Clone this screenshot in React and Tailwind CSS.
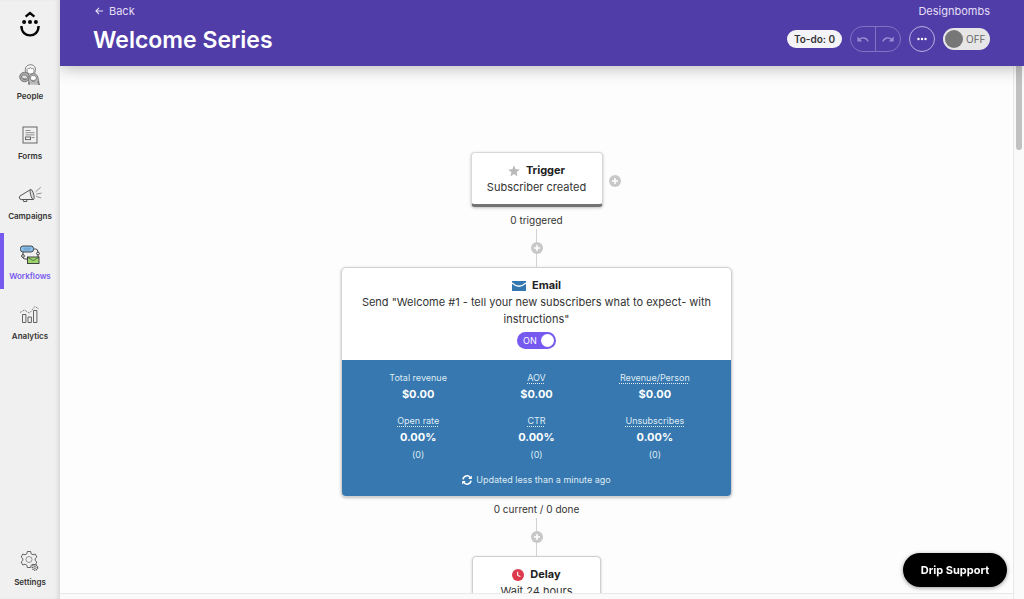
import { useState } from "react"

function Logo() {
  return (
    <svg viewBox="0 0 20 26" className="w-5 h-[26px]" fill="none" stroke="#050505">
      <path d="M5.6 5.6 L10 2 L14.4 5.6" strokeWidth="2.3" />
      <path d="M1.4 15 C1.4 27.5 18.6 27.5 18.6 15" strokeWidth="2.4" />
      <g fill="#050505" stroke="none">
        <circle cx="4.1" cy="10.9" r="2" />
        <circle cx="10" cy="10.9" r="2" />
        <circle cx="15.9" cy="10.9" r="2" />
      </g>
    </svg>
  )
}

function PeopleIcon() {
  return (
    <svg viewBox="0 0 22 22" className="w-[22px] h-[22px]" fill="none" stroke="#666" strokeWidth="0.8">
      <path d="M7 9 C5.5 6 6 1 11.5 0.7 C17 0.8 17.2 6 15.6 9" fill="#f3f3f3" />
      <path d="M8 5.5 C9 3.8 10 5 11.4 3.8 C13 5 14 4 15 5.5 C15.3 9 13.5 10 11.5 10 C9.3 10 7.7 8.5 8 5.5Z" fill="#fff" />
      <circle cx="5.5" cy="13" r="4.8" fill="#aaa" />
      <path d="M2.5 12 C5 10 7 11 8.6 13 C8.5 16 3 17 2.5 12Z" fill="#ddd" />
      <path d="M10 20.5 C9 14 10 9.5 14.5 9.6 C19.5 9.8 19 15 20.5 21" fill="#bbb" />
      <path d="M11.3 13 C13 11 16 11 17.3 13.2 C17.8 18.5 11 19 11.3 13Z" fill="#fff" />
      <path d="M12.7 16 q1.7 1.4 3.3 0 M4 14.5 q1.6 1 3 0 M10 18 v3 M18.5 17 l1.5 4" />
    </svg>
  )
}

function FormsIcon() {
  return (
    <svg viewBox="0 0 22 22" className="w-[22px] h-[22px]" fill="none" stroke="#666">
      <rect x="4" y="3" width="14" height="16" strokeWidth="1" />
      <path d="M6.5 6.5 h5 M6.5 8.7 h9 M6.5 10.9 h9 M12.5 13.5 h3" strokeWidth="0.7" />
      <rect x="6.5" y="13" width="5" height="2.6" strokeWidth="1" />
    </svg>
  )
}

function CampaignsIcon() {
  return (
    <svg viewBox="0 0 24 22" className="w-6 h-[22px]" fill="none" stroke="#555" strokeWidth="1" strokeLinejoin="round">
      <path d="M2 12 L12.6 5.5 L15.4 15.5 L3.2 15.5 C1 15.5 1 12.8 2 12Z" />
      <path d="M12.6 5.5 C14.6 4.8 17.6 15 15.4 15.5 C13.4 15.7 11 6 12.6 5.5Z" fill="#ddd" />
      <path d="M5 15.5 l0.6 2 h3.2 v-2" />
      <path d="M18 7.5 l4.5 -4 M18.6 10 l4.6 -0.8 M18.4 12.3 l4.4 1.6" strokeWidth="0.6" strokeLinecap="round" />
    </svg>
  )
}

function WorkflowsIcon() {
  return (
    <svg viewBox="0 0 22 22" className="w-[22px] h-[22px]" fill="none" stroke="#333" strokeWidth="0.9">
      <path d="M14.5 5 h2 q2.5 0 2.5 3 v5 M4 8 v5 q0 2 2 2 h3" />
      <rect x="1.5" y="2" width="13" height="6" rx="2.5" fill="#8cc3ee" />
      <path d="M4.5 4.2 h7 M4.5 5.9 h7" stroke="#4b7fa9" strokeWidth="0.6" />
      <rect x="8.5" y="13" width="11.5" height="6.5" fill="#9bd36d" />
      <path d="M8.5 13.2 l5.7 3.4 l5.7 -3.4" strokeWidth="0.6" />
      <circle cx="4" cy="12" r="1.4" fill="#f3f3f3" />
      <circle cx="19" cy="9.5" r="1.4" fill="#f3f3f3" />
    </svg>
  )
}

function AnalyticsIcon() {
  return (
    <svg viewBox="0 0 22 22" className="w-[22px] h-[22px]" fill="none" stroke="#555" strokeWidth="0.9">
      <path d="M3.5 18.5 v-8 h3.4 v8Z M9 18.5 v-5.5 h3.4 v5.5Z M14.5 18.5 v-12 h3.4 v12Z" />
      <path d="M1 8.5 L5.5 6 L10.5 9.2 L15.8 2.5 L20 5" strokeWidth="0.7" strokeDasharray="2 1" />
    </svg>
  )
}

function SettingsIcon() {
  return (
    <svg viewBox="0 0 22 22" className="w-[22px] h-[22px]" fill="none" stroke="#555" strokeWidth="0.9" strokeLinejoin="round">
      <path d="M7.8 3.8 L8.3 1.5 H11.7 L12.2 3.8 L14 4.8 L16.2 4 L17.9 7 L16.2 8.5 V10.5 L17.9 12 L16.2 15 L14 14.2 L12.2 15.2 L11.7 17.5 H8.3 L7.8 15.2 L6 14.2 L3.8 15 L2.1 12 L3.8 10.5 V8.5 L2.1 7 L3.8 4 L6 4.8Z" />
      <circle cx="10" cy="9.5" r="3" strokeWidth="0.6" />
      <circle cx="16" cy="17.5" r="2.7" fill="#e4e4e4" strokeDasharray="1.2 0.7" strokeWidth="1.2" />
      <circle cx="16" cy="17.5" r="1.1" strokeWidth="0.6" />
    </svg>
  )
}

const navItems = [
  { label: "People", Icon: PeopleIcon },
  { label: "Forms", Icon: FormsIcon },
  { label: "Campaigns", Icon: CampaignsIcon },
  { label: "Workflows", Icon: WorkflowsIcon, active: true },
  { label: "Analytics", Icon: AnalyticsIcon },
]

const revenueStats = [
  { label: "Total revenue", value: "$0.00" },
  { label: "AOV", value: "$0.00", hint: true },
  { label: "Revenue/Person", value: "$0.00", hint: true },
]

const rateStats = [
  { label: "Open rate", value: "0.00%", count: "(0)", hint: true },
  { label: "CTR", value: "0.00%", count: "(0)", hint: true },
  { label: "Unsubscribes", value: "0.00%", count: "(0)", hint: true },
]

function NavItem({ label, Icon, active }) {
  return (
    <a
      href="#"
      className={`flex h-14 w-full flex-col items-center border-x-4 border-r-transparent pt-[11px] ${
        active ? "border-l-[#7659ef] text-[#7659ef]" : "border-l-transparent text-[#333]"
      }`}
    >
      <Icon />
      <span className="mt-1 whitespace-nowrap text-[8px] leading-3 font-semibold">{label}</span>
    </a>
  )
}

function AddButton({ className = "" }) {
  return (
    <button aria-label="Add step" className={`h-3 w-3 rounded-full bg-[#c8c8c8] ${className}`}>
      <svg viewBox="0 0 12 12" className="h-3 w-3" stroke="#fff" strokeWidth="1.5">
        <path d="M6 3 V9 M3 6 H9" />
      </svg>
    </button>
  )
}

function Connector() {
  return (
    <div className="relative h-[38px] w-px bg-[#d2d2d2]">
      <AddButton className="absolute top-1/2 left-1/2 -translate-x-1/2 -translate-y-1/2" />
    </div>
  )
}

function StepTitle({ icon, children }) {
  return (
    <h2 className="flex items-center justify-center gap-[6px] text-[11px] leading-[17px] font-bold text-[#222]">
      {icon}
      {children}
    </h2>
  )
}

function Stat({ label, value, count, hint }) {
  return (
    <div>
      <dt className="text-[9px] leading-[17px] text-[#dfebf5]">
        <span className={hint ? "underline decoration-dotted decoration-1 underline-offset-2" : ""}>{label}</span>
      </dt>
      <dd className="text-[11px] leading-[17px] font-bold">{value}</dd>
      {count && <dd className="text-[9px] leading-[17px] text-[#dfebf5]">{count}</dd>}
    </div>
  )
}

function Header() {
  const [running, setRunning] = useState(false)

  return (
    <header className="relative z-10 flex h-[66px] shrink-0 justify-between bg-[#513da8] pr-[34px] pl-[33px] text-white shadow-[0_2px_16px_rgba(0,0,0,0.28)]">
      <div>
        <a href="#" className="mt-[3px] flex items-center gap-[5px] pl-[2px] text-[11px] leading-4 text-[#e4dff7]">
          <svg viewBox="0 0 10 10" className="h-[10px] w-[9px]" fill="none" stroke="currentColor" strokeWidth="1.2">
            <path d="M9 5 H1.2 M4.5 1.5 L1 5 L4.5 8.5" />
          </svg>
          Back
        </a>
        <h1 className="mt-[7px] text-[23px] leading-7 font-semibold">Welcome Series</h1>
      </div>
      <div className="flex flex-col items-end">
        <span className="mt-[3px] text-[11px] leading-4 text-[#e4dff7]">Designbombs</span>
        <div className="mt-[7px] flex items-center gap-2">
          <button className="h-[18px] w-[55px] rounded-full bg-[#f4f3f8] text-[10px] leading-[18px] font-semibold whitespace-nowrap text-[#333]">
            To-do: 0
          </button>
          <div className="flex h-[26px] w-[51px] rounded-full border border-[#8272c4] text-[#9b8dd0]">
            <button aria-label="Undo" className="flex flex-1 items-center justify-center border-r border-[#8272c4]">
              <svg viewBox="0 0 12 8" className="h-2 w-3" fill="none" stroke="currentColor" strokeWidth="1.4">
                <path d="M11.2 6.5 C9.5 2.4 5 1.8 2 4.8" />
                <path d="M0.4 1.5 V6.4 H5.3Z" fill="currentColor" stroke="none" />
              </svg>
            </button>
            <button aria-label="Redo" className="flex flex-1 items-center justify-center">
              <svg viewBox="0 0 12 8" className="h-2 w-3" fill="none" stroke="currentColor" strokeWidth="1.4">
                <path d="M0.8 6.5 C2.5 2.4 7 1.8 10 4.8" />
                <path d="M11.6 1.5 V6.4 H6.7Z" fill="currentColor" stroke="none" />
              </svg>
            </button>
          </div>
          <button aria-label="More" className="flex h-[26px] w-[26px] items-center justify-center rounded-full border border-[#b9afe2]">
            <svg viewBox="0 0 10 4" className="h-1 w-[10px]" fill="#fff">
              <circle cx="1.5" cy="2" r="1.2" />
              <circle cx="5" cy="2" r="1.2" />
              <circle cx="8.5" cy="2" r="1.2" />
            </svg>
          </button>
          <button
            role="switch"
            aria-checked={running}
            onClick={() => setRunning(!running)}
            className="flex h-[22px] w-[47px] items-center gap-[3px] rounded-full bg-[#e6e6e6] px-[2px] text-[10px] text-[#666]"
          >
            <span className="h-[18px] w-[18px] shrink-0 rounded-full bg-[#777]" />
            {running ? "ON" : "OFF"}
          </button>
        </div>
      </div>
    </header>
  )
}

function TriggerStep() {
  return (
    <div className="relative">
      <section className="w-[132px] rounded-[4px] border border-b-[3px] border-[#d8d8d8] border-b-[#737373] bg-white pt-[9px] pb-2 text-center shadow-[0_1px_3px_rgba(0,0,0,0.25)]">
        <StepTitle
          icon={
            <svg viewBox="0 0 12 12" className="h-3 w-3" fill="#b9b9b9">
              <path d="M6 0.3 L7.6 4.2 L11.8 4.5 L8.6 7.2 L9.6 11.4 L6 9.1 L2.4 11.4 L3.4 7.2 L0.2 4.5 L4.4 4.2Z" />
            </svg>
          }
        >
          Trigger
        </StepTitle>
        <p className="text-[11px] leading-[17px] whitespace-nowrap">Subscriber created</p>
      </section>
      <AddButton className="absolute top-[23px] left-full ml-[6px]" />
    </div>
  )
}

function EmailStep() {
  const [on, setOn] = useState(true)

  return (
    <section className="w-[391px] overflow-hidden rounded-[5px] border border-[#d2d2d2] bg-white text-center shadow-[0_1px_3px_rgba(0,0,0,0.25)]">
      <div className="flex flex-col items-center px-4 pt-[9px] pb-[11px]">
        <StepTitle
          icon={
            <svg viewBox="0 0 14 10" className="h-[10px] w-[14px]">
              <rect width="14" height="10" fill="#3578b0" />
              <path d="M0 2 Q7 8.5 14 2" fill="none" stroke="#fff" strokeWidth="1.3" />
            </svg>
          }
        >
          Email
        </StepTitle>
        <p className="text-[11px] leading-[17px]">
          Send "Welcome #1 - tell your new subscribers what to expect- with instructions"
        </p>
        <button
          role="switch"
          aria-checked={on}
          onClick={() => setOn(!on)}
          className="mt-1 flex h-[17px] w-[39px] items-center justify-between rounded-full bg-[#7659ef] pr-[2px] pl-[6px] text-[9px] text-white"
        >
          {on ? "ON" : "OFF"}
          <span className="h-[13px] w-[13px] rounded-full bg-white" />
        </button>
      </div>
      <div className="bg-[#3678af] px-[17px] pt-[9px] pb-2 text-white">
        <dl className="grid grid-cols-3 gap-y-[9px]">
          {revenueStats.map((stat) => <Stat key={stat.label} {...stat} />)}
          {rateStats.map((stat) => <Stat key={stat.label} {...stat} />)}
        </dl>
        <p className="mt-2 flex items-center justify-center gap-1 text-[9px] leading-[17px] text-[#dfebf5]">
          <svg viewBox="0 0 10 10" className="h-[10px] w-[10px]" fill="none" stroke="#fff" strokeWidth="1.5">
            <path d="M1 4.3 A4 4 0 0 1 8.3 2.6 M9 5.7 A4 4 0 0 1 1.7 7.4" />
            <path d="M9.8 0.4 V4 H6.2Z M0.2 9.6 V6 H3.8Z" fill="#fff" stroke="none" />
          </svg>
          Updated less than a minute ago
        </p>
      </div>
    </section>
  )
}

function DelayStep() {
  return (
    <section className="w-[129px] rounded-[4px] border border-[#cfcfcf] bg-white pt-[9px] pb-2 text-center shadow-[0_1px_3px_rgba(0,0,0,0.2)]">
      <StepTitle
        icon={
          <svg viewBox="0 0 12 12" className="h-3 w-3" fill="none" stroke="#fff">
            <circle cx="6" cy="6" r="6" fill="#dd3a4d" stroke="none" />
            <path d="M5.7 2.8 V6.4 L8.4 7.5" strokeWidth="1.1" />
          </svg>
        }
      >
        Delay
      </StepTitle>
      <p className="text-[11px] leading-[17px]">Wait 24 hours</p>
    </section>
  )
}

export default function App() {
  return (
    <div className="flex h-screen overflow-hidden bg-[#fdfdfd] font-[Inter,sans-serif] text-[#333]">
      <nav className="z-20 flex w-[60px] shrink-0 flex-col items-center bg-[#f0f0f0] pb-1 shadow-[inset_-4px_0_4px_-2px_rgba(0,0,0,0.1)]">
        <a href="#" aria-label="Home" className="mt-[11px] mb-4">
          <Logo />
        </a>
        <div className="flex w-full flex-col gap-1">
          {navItems.map((item) => <NavItem key={item.label} {...item} />)}
        </div>
        <div className="mt-auto w-full">
          <NavItem label="Settings" Icon={SettingsIcon} />
        </div>
      </nav>

      <div className="flex min-w-0 flex-1 flex-col">
        <Header />
        <div className="flex min-h-0 flex-1">
          <div className="flex min-w-0 flex-1 flex-col">
            <main className="flex min-h-0 flex-1 flex-col items-center overflow-hidden pt-[86px] *:shrink-0">
              <TriggerStep />
              <p className="mt-1 text-[10px] leading-[18px]">0 triggered</p>
              <Connector />
              <EmailStep />
              <p className="mt-[3px] text-[10px] leading-[18px]">0 current / 0 done</p>
              <Connector />
              <DelayStep />
            </main>
            <div className="h-[6px] border-t border-[#e9e9e9] bg-[#fafafa]" />
          </div>
          <div className="w-[11px] shrink-0 border-l border-[#e9e9e9] bg-[#fafafa] px-[2px]">
            <div className="h-[84px] w-[6px] rounded-b-full bg-[#c1c1c1]" />
          </div>
        </div>
      </div>

      <button className="fixed right-[17px] bottom-3 z-30 h-[34px] w-[104px] rounded-full bg-black text-[11px] font-bold text-white shadow-[0_1px_4px_rgba(0,0,0,0.4)]">
        Drip Support
      </button>
    </div>
  )
}
